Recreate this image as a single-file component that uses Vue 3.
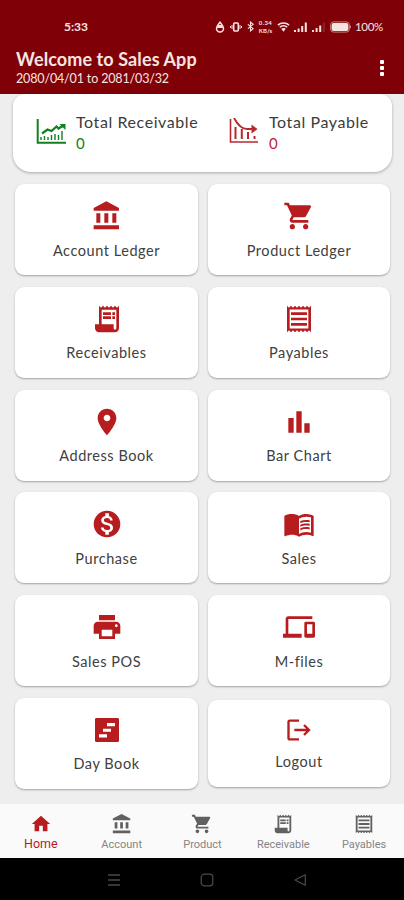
<script setup>
const paths = {
  bank: 'M11.5 1L2 6v2h19V6m-5 4v7h3v-7M2 22h19v-3H2m8-9v7h3v-7m-9 0v7h3v-7H4z',
  cart: 'M7 18c-1.1 0-1.99.9-1.99 2S5.9 22 7 22s2-.9 2-2-.9-2-2-2zM1 2v2h2l3.6 7.59-1.35 2.45c-.16.28-.25.61-.25.96 0 1.1.9 2 2 2h12v-2H7.42c-.14 0-.25-.11-.25-.25l.03-.12.9-1.63h7.45c.75 0 1.41-.41 1.75-1.03l3.58-6.49c.08-.14.12-.31.12-.48 0-.55-.45-1-1-1H5.21l-.94-2H1zm16 16c-1.1 0-1.99.9-1.99 2s.89 2 1.99 2 2-.9 2-2-.9-2-2-2z',
  scroll: 'M19.5 3.5L18 2l-1.5 1.5L15 2l-1.5 1.5L12 2l-1.5 1.5L9 2 7.5 3.5 6 2v14H3v3c0 1.66 1.34 3 3 3h12c1.66 0 3-1.34 3-3V2l-1.5 1.5zM19 19c0 .55-.45 1-1 1s-1-.45-1-1v-3H8V5h11v14zM9 7h6v2H9zM16 7h2v2h-2zM9 10h6v2H9zM16 10h2v2h-2z',
  receipt: 'M19.5 3.5L18 2l-1.5 1.5L15 2l-1.5 1.5L12 2l-1.5 1.5L9 2 7.5 3.5 6 2 4.5 3.5 3 2v20l1.5-1.5L6 22l1.5-1.5L9 22l1.5-1.5L12 22l1.5-1.5L15 22l1.5-1.5L18 22l1.5-1.5L21 22V2l-1.5 1.5zM19 19.09H5V4.91h14v14.18zM6 15h12v2H6zm0-4h12v2H6zm0-4h12v2H6z',
  place: 'M12 2C8.13 2 5 5.13 5 9c0 5.25 7 13 7 13s7-7.75 7-13c0-3.87-3.13-7-7-7zm0 9.5c-1.38 0-2.5-1.12-2.5-2.5s1.12-2.5 2.5-2.5 2.5 1.12 2.5 2.5-1.12 2.5-2.5 2.5z',
  bars: 'M4 9h4v11H4zm12 4h4v7h-4zm-6-9h4v16h-4z',
  dollar: 'M12 2C6.48 2 2 6.48 2 12s4.48 10 10 10 10-4.48 10-10S17.52 2 12 2zm1.41 16.09V20h-2.67v-1.93c-1.71-.36-3.16-1.46-3.27-3.4h1.96c.1 1.05.82 1.87 2.65 1.87 1.96 0 2.4-.98 2.4-1.59 0-.83-.44-1.61-2.67-2.14-2.48-.6-4.18-1.62-4.18-3.67 0-1.72 1.39-2.84 3.11-3.21V4h2.67v1.95c1.86.45 2.79 1.86 2.85 3.39H14.3c-.05-1.11-.64-1.87-2.22-1.87-1.5 0-2.4.68-2.4 1.64 0 .84.65 1.39 2.67 1.91s4.18 1.39 4.18 3.91c-.01 1.83-1.38 2.83-3.12 3.16z',
  book: 'M21 5c-1.11-.35-2.33-.5-3.5-.5-1.95 0-4.05.4-5.5 1.5-1.45-1.1-3.55-1.5-5.5-1.5S2.45 4.9 1 6v14.65c0 .25.25.5.5.5.1 0 .15-.05.25-.05C3.1 20.45 5.05 20 6.5 20c1.95 0 4.05.4 5.5 1.5 1.35-.85 3.8-1.5 5.5-1.5 1.65 0 3.35.3 4.75 1.05.1.05.15.05.25.05.25 0 .5-.25.5-.5V6c-.6-.45-1.25-.75-2-1zm0 13.5c-1.1-.35-2.3-.5-3.5-.5-1.7 0-4.15.65-5.5 1.5V8c1.35-.85 3.8-1.5 5.5-1.5 1.2 0 2.4.15 3.5.5v11.5zM17.5 10.5c.88 0 1.73.09 2.5.26V9.24c-.79-.15-1.64-.24-2.5-.24-1.7 0-3.24.29-4.5.83v1.66c1.13-.64 2.7-.99 4.5-.99zM13 12.49v1.66c1.13-.64 2.7-.99 4.5-.99.88 0 1.73.09 2.5.26V11.9c-.79-.15-1.64-.24-2.5-.24-1.7 0-3.24.3-4.5.83zM17.5 14.33c-1.7 0-3.24.29-4.5.83v1.66c1.13-.64 2.7-.99 4.5-.99.88 0 1.73.09 2.5.26v-1.52c-.79-.16-1.64-.24-2.5-.24z',
  print: 'M19 8H5c-1.66 0-3 1.34-3 3v6h4v4h12v-4h4v-6c0-1.66-1.34-3-3-3zm-3 11H8v-5h8v5zm3-7c-.55 0-1-.45-1-1s.45-1 1-1 1 .45 1 1-.45 1-1 1zm-1-9H6v4h12V3z',
  devices: 'M4 6h18V4H4c-1.1 0-2 .9-2 2v11H0v3h14v-3H4V6zm19 2h-6c-.55 0-1 .45-1 1v10c0 .55.45 1 1 1h6c.55 0 1-.45 1-1V9c0-.55-.45-1-1-1zm-1 9h-4v-7h4v7z',
  steps: 'M4 3h16a1 1 0 0 1 1 1v16a1 1 0 0 1-1 1H4a1 1 0 0 1-1-1V4a1 1 0 0 1 1-1zM12 6.8v2.4h6V6.8zM9 11v2.4h6V11zM6 15.2v2.4h6v-2.4z',
  logout: 'M17 7l-1.41 1.41L18.17 11H8v2h10.17l-2.58 2.58L17 17l5-5zM4 5h8V3H4c-1.1 0-2 .9-2 2v14c0 1.1.9 2 2 2h8v-2H4V5z',
  home: 'M10 20v-6h4v6h5v-8h3L12 3 2 12h3v8z',
}

const tiles = [
  { label: 'Account Ledger', icon: 'bank' },
  { label: 'Product Ledger', icon: 'cart' },
  { label: 'Receivables', icon: 'scroll' },
  { label: 'Payables', icon: 'receipt' },
  { label: 'Address Book', icon: 'place' },
  { label: 'Bar Chart', icon: 'bars' },
  { label: 'Purchase', icon: 'dollar' },
  { label: 'Sales', icon: 'book' },
  { label: 'Sales POS', icon: 'print' },
  { label: 'M-files', icon: 'devices' },
  { label: 'Day Book', icon: 'steps' },
  { label: 'Logout', icon: 'logout', compact: true },
]

const tabs = [
  { label: 'Home', icon: 'home', active: true },
  { label: 'Account', icon: 'bank' },
  { label: 'Product', icon: 'cart' },
  { label: 'Receivable', icon: 'scroll' },
  { label: 'Payables', icon: 'receipt' },
]
</script>

<template>
  <div class="screen">
    <header class="top">
      <div class="status">
        <span class="clock">5:33</span>
        <div class="indicators">
          <svg class="drop" viewBox="0 0 10 12"><path d="M5 1.200C3 4 1.500 5.200 1.500 7.400a3.500 3.500 0 0 0 7 0C8.500 5.200 7 4 5 1.200z" fill="none" stroke="currentColor" stroke-width="1.500" /><path d="M3 4h4l1 3H2z" fill="currentColor" /></svg>
          <svg class="vibrate" viewBox="0 0 12 10"><rect x="3.700" y="1" width="4.600" height="8" rx="1" fill="none" stroke="currentColor" stroke-width="1.600" /><path d="M2 3v4M.5 4v2M10 3v4M11.500 4v2" stroke="currentColor" /></svg>
          <svg class="bluetooth" viewBox="0 0 8 12"><path d="M1 3.500l6 5L4 11V1l3 2.500-6 5" fill="none" stroke="currentColor" stroke-width="1.300" /></svg>
          <span class="speed"><b>0.34</b><b>KB/s</b></span>
          <svg class="wifi" viewBox="0 0 14 12"><path d="M1 4a9 9 0 0 1 12 0M3 6.300a6 6 0 0 1 8 0" fill="none" stroke="currentColor" stroke-width="1.700" /><path d="M4.500 8a4 4 0 0 1 5 0L7 11z" fill="currentColor" /></svg>
          <svg class="signal" viewBox="0 0 15 12"><path d="M1 9h2v2H1zM4.600 7.500h2V11h-2zM8.200 5h2v6h-2zM11.800 1.500h2V11h-2z" fill="currentColor" /></svg>
          <svg class="signal second" viewBox="0 0 15 12"><path d="M1 9h2v2H1zM4.600 7h2v4h-2zM8.200 4.500h2V11h-2z" fill="currentColor" /><path d="M11.800 1.500h2V11h-2z" fill="currentColor" opacity=".15" /></svg>
          <svg class="battery" viewBox="0 0 22 12"><rect x=".6" y=".9" width="18.800" height="10.200" rx="3" fill="none" stroke="currentColor" stroke-width=".8" opacity=".7" /><rect x="1.600" y="1.900" width="16.800" height="8.200" rx="2" fill="currentColor" /><path d="M20 4.300q1.600 1.700 0 3.400z" fill="currentColor" /></svg>
          <span class="percent">100%</span>
        </div>
      </div>
      <div class="bar">
        <div>
          <h1>Welcome to Sales App</h1>
          <p>2080/04/01 to 2081/03/32</p>
        </div>
        <div class="more"><i></i><i></i><i></i></div>
      </div>
    </header>

    <main class="content">
      <section class="summary">
        <div class="total receivable">
          <svg viewBox="0 0 30 26"><path d="M1.700 0v23.700H30" fill="none" stroke="currentColor" stroke-width="2" /><path d="M5 21v-3M8.500 21v-4M12 21v-3M15.500 21v-5M19 21v-6M22.500 21v-5M26 21V12" stroke="currentColor" stroke-width="1.400" /><path d="M6 14.500l5.500-4 4 1.500 5-4.500 2 2 5-3" fill="none" stroke="currentColor" stroke-width="2.200" /><path d="M23.500 5h6v6z" fill="currentColor" /></svg>
          <div><span class="name">Total Receivable</span><span class="value">0</span></div>
        </div>
        <div class="total payable">
          <svg viewBox="0 0 30 26"><path d="M1.500 1v23H29" fill="none" stroke="currentColor" stroke-width="1.600" /><path d="M6.500 9v12M12.800 11v10M19 14v7M25.500 18v3" stroke="currentColor" stroke-width="2" /><path d="M5 0q6 11 13 11h8" fill="none" stroke="currentColor" stroke-width="1.900" /><path d="M22.500 6.500l6 4.500-6 4.500z" fill="currentColor" /></svg>
          <div><span class="name">Total Payable</span><span class="value">0</span></div>
        </div>
      </section>

      <section class="grid">
        <button v-for="tile in tiles" :key="tile.label" class="tile" :class="{ compact: tile.compact }">
          <svg viewBox="0 0 24 24"><path :d="paths[tile.icon]" fill="currentColor" fill-rule="evenodd" /></svg>
          <span>{{ tile.label }}</span>
        </button>
      </section>
    </main>

    <nav class="tabs">
      <a v-for="tab in tabs" :key="tab.label" class="tab" :class="{ active: tab.active }">
        <svg viewBox="0 0 24 24"><path :d="paths[tab.icon]" fill="currentColor" fill-rule="evenodd" /></svg>
        <span>{{ tab.label }}</span>
      </a>
    </nav>

    <footer class="system">
      <svg viewBox="0 0 14 14"><path d="M1 2h12M1 7h12M1 12h12" stroke="currentColor" stroke-width="1.500" /></svg>
      <svg viewBox="0 0 14 14"><rect x="1.200" y="1.200" width="11.600" height="11.600" rx="3" fill="none" stroke="currentColor" stroke-width="1.200" /></svg>
      <svg viewBox="0 0 14 14"><path d="M12.300 1.700v10.600L2 7z" fill="none" stroke="currentColor" stroke-width="1.200" stroke-linejoin="round" /></svg>
    </footer>
  </div>
</template>

<style>
body {
  background: #eee;
}
</style>

<style scoped>
* {
  box-sizing: border-box;
  margin: 0;
}
svg {
  display: block;
  flex: none;
}
.screen {
  width: 404px;
  height: 900px;
  display: flex;
  flex-direction: column;
  overflow: hidden;
  background: #eeeeee;
  font-family: Lato, 'Liberation Sans', sans-serif;
}
.top {
  height: 94px;
  flex: none;
  background: #800008;
  color: #f6e4e1;
}
.status {
  height: 48px;
  padding: 18px 20px 0 64px;
  display: flex;
  justify-content: space-between;
  align-items: flex-start;
}
.clock {
  font-size: 12px;
  line-height: 17px;
  font-weight: 700;
}
.indicators {
  height: 17px;
  display: flex;
  align-items: center;
}
.drop {
  width: 10px;
  height: 12px;
  margin-right: 5px;
}
.vibrate {
  width: 12px;
  height: 10px;
  margin-right: 5px;
}
.bluetooth {
  width: 7px;
  height: 11px;
  margin-right: 3px;
}
.speed {
  width: 17px;
  display: flex;
  flex-direction: column;
  align-items: center;
  font-size: 6px;
  line-height: 7.5px;
  margin-right: 3px;
}
.speed b:first-child {
  letter-spacing: 0.4px;
}
.wifi {
  width: 13px;
  height: 12px;
  margin-right: 3px;
}
.signal {
  width: 15px;
  height: 12px;
  margin-right: 3px;
}
.signal.second {
  margin-right: 4px;
}
.battery {
  width: 22px;
  height: 12px;
  margin-right: 3px;
}
.percent {
  width: 29px;
  font-size: 11.5px;
  letter-spacing: -0.3px;
  white-space: nowrap;
}
.bar {
  display: flex;
  justify-content: space-between;
  padding: 0 20px 0 16px;
}
h1 {
  font-size: 18px;
  line-height: 22px;
  font-weight: 700;
  letter-spacing: 0.1px;
  white-space: nowrap;
}
p {
  font-size: 12.5px;
  line-height: 17px;
  letter-spacing: -0.15px;
}
.more {
  display: flex;
  flex-direction: column;
  gap: 2px;
  padding-top: 12px;
}
.more i {
  width: 4px;
  height: 4px;
  border-radius: 1px;
  background: #fff;
}
.content {
  flex: 1;
  padding: 0 13px;
}
.summary {
  width: 379px;
  height: 78px;
  display: flex;
  padding: 18px 0 0 23px;
  border-radius: 12px 12px 18px 18px;
  background: #fff;
  box-shadow: 0 1px 3px rgba(0, 0, 0, 0.3);
}
.total {
  width: 193px;
  flex: none;
  display: flex;
}
.total svg {
  width: 30px;
  height: 26px;
  margin: 7px 10px 0 0;
}
.payable svg {
  margin-top: 6px;
}
.total > div {
  display: flex;
  flex-direction: column;
}
.name {
  font-size: 16px;
  line-height: 20px;
  letter-spacing: 0.58px;
  color: #3c3c3c;
  white-space: nowrap;
}
.value {
  font-size: 15px;
  line-height: 22px;
}
.receivable {
  color: #118020;
}
.payable {
  color: #b8292d;
}
.grid {
  padding: 12px 1px 0 2px;
  display: grid;
  grid-template-columns: 183px 182px;
  grid-auto-rows: 91px;
  gap: 11.8px 10px;
  align-items: center;
}
.tile {
  height: 91px;
  display: flex;
  flex-direction: column;
  align-items: center;
  padding: 16px 0 0;
  border: 0;
  border-radius: 9px;
  background: #fff;
  box-shadow: 0 1px 2px rgba(0, 0, 0, 0.32);
  color: #b71c1f;
  font-family: inherit;
}
.tile svg {
  width: 32px;
  height: 32px;
}
.tile span {
  margin-top: 8.5px;
  font-size: 14.5px;
  line-height: 20px;
  letter-spacing: 0.55px;
  color: #404040;
  white-space: nowrap;
}
.tile.compact {
  height: 87px;
}
.tile.compact svg {
  width: 28px;
  height: 28px;
}
.tile.compact span {
  margin-top: 8.5px;
}
.tabs {
  height: 54px;
  flex: none;
  display: flex;
  background: #fafafa;
  font-family: Roboto, sans-serif;
}
.tab {
  flex: 1;
  display: flex;
  flex-direction: column;
  align-items: center;
  padding: 9px 0 0 1px;
  color: #616161;
}
.tab svg {
  width: 22px;
  height: 22px;
}
.tab span {
  margin-top: 2px;
  font-size: 11px;
  line-height: 15px;
  color: #858585;
}
.tab.active,
.tab.active span {
  color: #b71c1f;
}
.tab.active span {
  margin-top: 1px;
  font-size: 12.5px;
}
.system {
  height: 42px;
  flex: none;
  display: flex;
  align-items: center;
  justify-content: center;
  gap: 79px;
  padding: 2px 0 0 9px;
  background: #000;
  color: #4a4a4a;
}
.system svg {
  width: 14px;
  height: 14px;
}
</style>
